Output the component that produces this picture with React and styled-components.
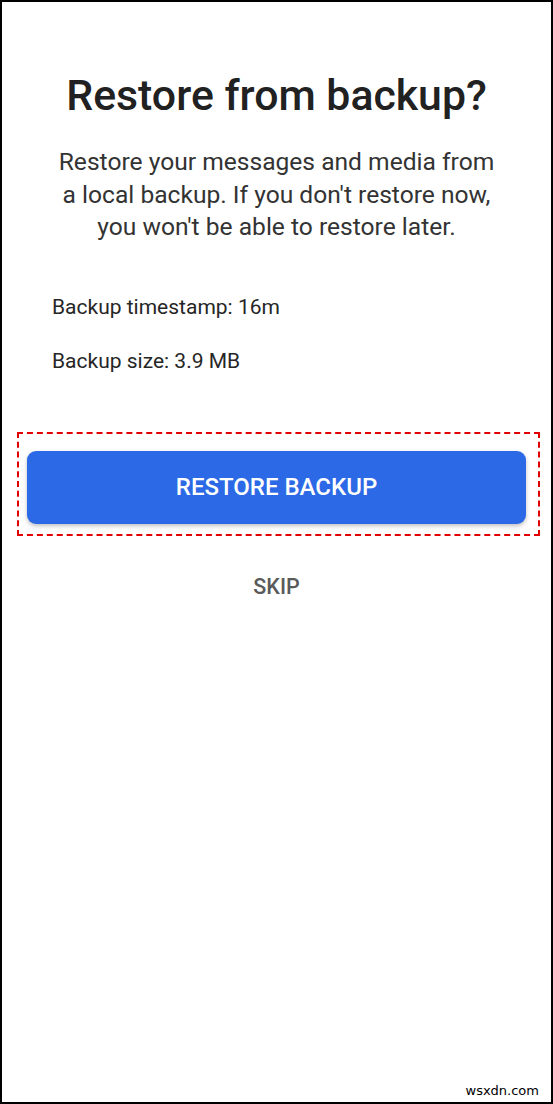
import styled, { createGlobalStyle } from 'styled-components';

const GlobalStyle = createGlobalStyle`
   html, body {
      margin: 0;
      padding: 0;
      background: #fff;
   }
   * {
      box-sizing: border-box;
   }
`;

const Frame = styled.div`
   width: 553px;
   height: 1104px;
   border: 2px solid #000;
   background: #fff;
   font-family: Roboto, 'Noto Sans', sans-serif;
   display: flex;
   flex-direction: column;
   align-items: center;
   position: relative;
`;

const Title = styled.h1`
   margin: 68px 0 0;
   font-size: 42.8px;
   font-weight: 500;
   color: #212121;
   line-height: 50px;
   text-align: center;
`;

const Intro = styled.p`
   margin: 26px 0 0;
   font-size: 24.6px;
   line-height: 32.5px;
   color: #333;
   text-align: center;
`;

const Details = styled.div`
   align-self: stretch;
   display: flex;
   flex-direction: column;
   gap: 30px;
   padding: 0 0 0 50px;
   margin-top: 51px;
`;

const Detail = styled.div`
   font-size: 21px;
   line-height: 24px;
   color: #262626;
`;

const Highlight = styled.div`
   align-self: stretch;
   margin: 59px 11px 0 15px;
   padding: 17px 12px 10px 8px;
   border: 2.5px dashed #e00000;
`;

const PrimaryButton = styled.button`
   display: block;
   width: 100%;
   height: 73px;
   border: none;
   border-radius: 9px;
   background: #2c69e6;
   color: #fff;
   font-family: inherit;
   font-size: 24px;
   font-weight: 500;
   box-shadow: 0 2px 4px rgba(0, 0, 0, 0.25);
   cursor: pointer;
`;

const TextButton = styled.button`
   margin-top: 37px;
   border: none;
   background: none;
   font-family: inherit;
   font-size: 21.5px;
   font-weight: 500;
   color: #5a5a5a;
   cursor: pointer;
`;

const Watermark = styled.span`
   position: absolute;
   right: 12px;
   bottom: 4px;
   font-family: 'DejaVu Sans', sans-serif;
   font-size: 13px;
   color: #000;
`;

const App = () => {
   return (
      <>
         <GlobalStyle />
         <Frame>
            <Title>Restore from backup?</Title>
            <Intro>
               Restore your messages and media from
               <br />
               a local backup. If you don't restore now,
               <br />
               you won't be able to restore later.
            </Intro>
            <Details>
               <Detail>Backup timestamp: 16m</Detail>
               <Detail>Backup size: 3.9 MB</Detail>
            </Details>
            <Highlight>
               <PrimaryButton>RESTORE BACKUP</PrimaryButton>
            </Highlight>
            <TextButton>SKIP</TextButton>
            <Watermark>wsxdn.com</Watermark>
         </Frame>
      </>
   );
};

export default App;
